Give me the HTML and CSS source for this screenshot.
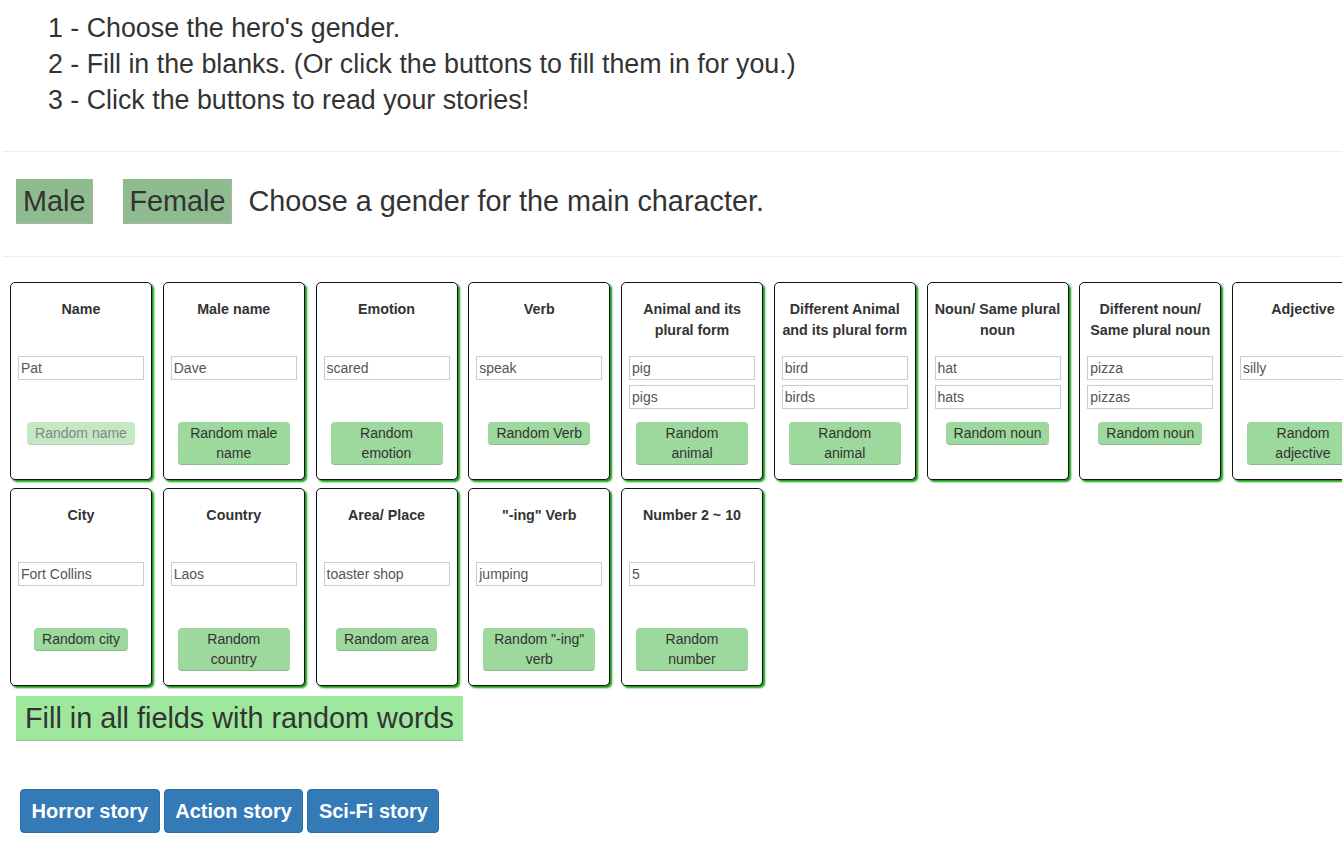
FILE: index.html
```html
<!DOCTYPE html>
<html lang="en">
<head>
<meta charset="utf-8">
<title>Story Maker</title>
<link rel="stylesheet" href="styles.css">
</head>
<body>
<div class="page">
  <ol class="steps">
    <li>1 - Choose the hero's gender.</li>
    <li>2 - Fill in the blanks. (Or click the buttons to fill them in for you.)</li>
    <li>3 - Click the buttons to read your stories!</li>
  </ol>
  <hr class="rule">
  <div class="gender">
    <button class="gender-btn">Male</button>
    <button class="gender-btn">Female</button>
    <span class="gender-text">Choose a gender for the main character.</span>
  </div>
  <hr class="rule">
  <div class="cards">
    <div class="card">
      <div class="card-title">Name</div>
      <div class="fields"><input class="field" value="Pat"></div>
      <div class="actions"><button class="rand" disabled>Random name</button></div>
    </div>
    <div class="card">
      <div class="card-title">Male name</div>
      <div class="fields"><input class="field" value="Dave"></div>
      <div class="actions"><button class="rand">Random male name</button></div>
    </div>
    <div class="card">
      <div class="card-title">Emotion</div>
      <div class="fields"><input class="field" value="scared"></div>
      <div class="actions"><button class="rand">Random emotion</button></div>
    </div>
    <div class="card">
      <div class="card-title">Verb</div>
      <div class="fields"><input class="field" value="speak"></div>
      <div class="actions"><button class="rand">Random Verb</button></div>
    </div>
    <div class="card">
      <div class="card-title">Animal and its plural form</div>
      <div class="fields"><input class="field" value="pig"><input class="field" value="pigs"></div>
      <div class="actions"><button class="rand">Random animal</button></div>
    </div>
    <div class="card">
      <div class="card-title">Different Animal and its plural form</div>
      <div class="fields"><input class="field" value="bird"><input class="field" value="birds"></div>
      <div class="actions"><button class="rand">Random animal</button></div>
    </div>
    <div class="card">
      <div class="card-title">Noun/ Same plural noun</div>
      <div class="fields"><input class="field" value="hat"><input class="field" value="hats"></div>
      <div class="actions"><button class="rand">Random noun</button></div>
    </div>
    <div class="card">
      <div class="card-title">Different noun/ Same plural noun</div>
      <div class="fields"><input class="field" value="pizza"><input class="field" value="pizzas"></div>
      <div class="actions"><button class="rand">Random noun</button></div>
    </div>
    <div class="card">
      <div class="card-title">Adjective</div>
      <div class="fields"><input class="field" value="silly"></div>
      <div class="actions"><button class="rand">Random adjective</button></div>
    </div>
    <div class="card">
      <div class="card-title">City</div>
      <div class="fields"><input class="field" value="Fort Collins"></div>
      <div class="actions"><button class="rand">Random city</button></div>
    </div>
    <div class="card">
      <div class="card-title">Country</div>
      <div class="fields"><input class="field" value="Laos"></div>
      <div class="actions"><button class="rand">Random country</button></div>
    </div>
    <div class="card">
      <div class="card-title">Area/ Place</div>
      <div class="fields"><input class="field" value="toaster shop"></div>
      <div class="actions"><button class="rand">Random area</button></div>
    </div>
    <div class="card">
      <div class="card-title">"-ing" Verb</div>
      <div class="fields"><input class="field" value="jumping"></div>
      <div class="actions"><button class="rand">Random "-ing" verb</button></div>
    </div>
    <div class="card">
      <div class="card-title">Number 2 ~ 10</div>
      <div class="fields"><input class="field" value="5"></div>
      <div class="actions"><button class="rand">Random number</button></div>
    </div>
  </div>
  <div class="fill-row">
    <button class="fill-btn">Fill in all fields with random words</button>
  </div>
  <div class="stories">
    <button class="story-btn">Horror story</button>
    <button class="story-btn">Action story</button>
    <button class="story-btn">Sci-Fi story</button>
  </div>
</div>
</body>
</html>
```

FILE: styles.css
```css
html, body {
  margin: 0;
  padding: 0;
  overflow: hidden;
  background: #fff;
}

body {
  font-family: "Liberation Sans", Arial, Helvetica, sans-serif;
  color: #333;
}

.page {
  width: 1400px;
}

.steps {
  list-style: none;
  margin: 0;
  padding: 10px 0 0 48px;
  font-size: 26.8px;
  line-height: 36px;
}

.rule {
  margin: 0 0 0 3px;
  border: 0;
  border-top: 1px solid #eee;
  height: 0;
}

.steps + .rule {
  margin-top: 33px;
}

.gender {
  display: flex;
  align-items: center;
  padding: 27px 0 32px 16px;
}

.gender-btn {
  font-family: inherit;
  font-size: 28.8px;
  line-height: 33px;
  color: #333;
  background: #8fbc8f;
  border: 0;
  border-right: 1px solid #b0b0b0;
  border-bottom: 1px solid #b0b0b0;
  padding: 6px 7px 5px 7px;
  margin: 0 30px 0 0;
  border-radius: 0;
}

.gender-btn + .gender-btn {
  margin-right: 16px;
  padding: 6px 6px 5px 6px;
}

.gender-text {
  font-size: 28.8px;
  line-height: 33px;
}

.cards {
  display: flex;
  flex-wrap: wrap;
  column-gap: 10.75px;
  row-gap: 8px;
  padding: 25px 0 0 10px;
  width: 1390px;
}

.card {
  box-sizing: border-box;
  width: 142px;
  height: 198px;
  border: 1px solid #111;
  border-radius: 5px;
  box-shadow: 2px 2px 2px #119911;
  background: #fff;
  padding: 16px 0 0 0;
  display: flex;
  flex-direction: column;
  align-items: center;
}

.card-title {
  height: 40px;
  width: 134px;
  text-align: center;
  font-weight: bold;
  font-size: 14.3px;
  line-height: 20.5px;
  color: #333;
}

.fields {
  margin-top: 17px;
  height: 60px;
  display: flex;
  flex-direction: column;
  gap: 5px;
}

.field {
  box-sizing: border-box;
  width: 126px;
  height: 24px;
  border: 1px solid #ccc;
  padding: 0 2px;
  font-family: inherit;
  font-size: 14px;
  color: #555;
  background: #fff;
  outline: none;
}

.actions {
  margin-top: 6px;
  text-align: center;
}

.rand {
  max-width: 112px;
  font-family: inherit;
  font-size: 14px;
  line-height: 20px;
  color: #333;
  background: #9dd89d;
  border: 0;
  border-bottom: 1px solid #8ab98a;
  border-radius: 4px;
  padding: 1px 8px;
  white-space: normal;
}

.rand:disabled {
  opacity: 0.6;
  color: #333;
}

.fill-row {
  padding: 10px 0 0 16px;
}

.fill-btn {
  font-family: inherit;
  font-size: 28.8px;
  line-height: 33px;
  color: #333;
  background: #9ee89e;
  border: 0;
  border-bottom: 1px solid #b4b4b4;
  padding: 6px 9px 5px 9px;
  border-radius: 0;
}

.stories {
  display: flex;
  gap: 4px;
  padding: 48px 0 0 20px;
}

.story-btn {
  font-family: inherit;
  font-size: 20px;
  font-weight: bold;
  line-height: 22px;
  color: #fff;
  background: #337ab7;
  border: 1px solid #2e6da4;
  border-radius: 4px;
  padding: 10px 10.5px;
}
```
